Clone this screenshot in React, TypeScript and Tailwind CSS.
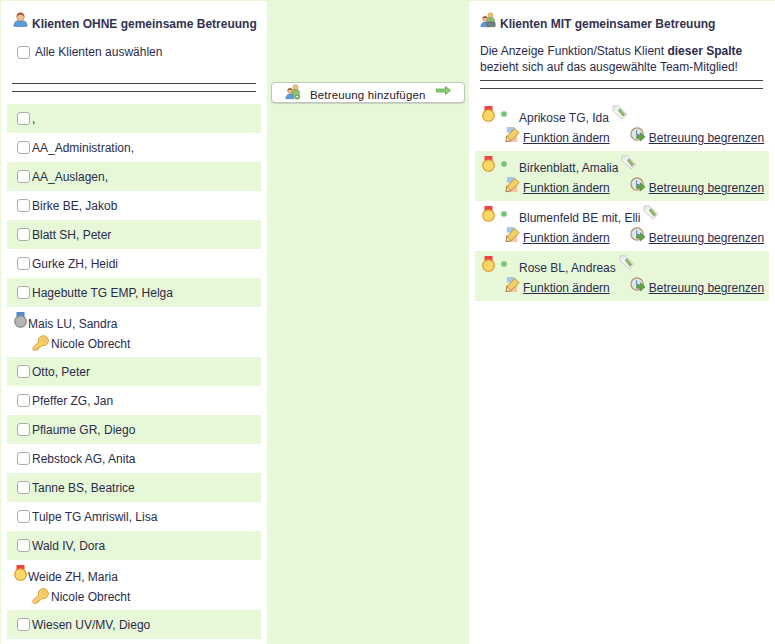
import React from "react";

const PersonIcon = () => (
  <svg width="15" height="15" viewBox="0 0 16 16" className="shrink-0">
    <path d="M1 14.500c0-3 2-5 4-5h6c2 0 4 2 4 5 0 1-1 1-2 1H3c-1 0-2 0-2-1z" fill="#5b9bdc" stroke="#3b74b0" strokeWidth="0.7" />
    <circle cx="8" cy="5.500" r="4" fill="#f0bd94" stroke="#b97f58" strokeWidth="0.6" />
    <path d="M4 5.500c-.5-3 1.500-5 4-5s4.500 2 4 5c-1-2-2-2.500-4-2.500S5 3.500 4 5.500z" fill="#9a5a2c" />
  </svg>
);

const GroupIcon = ({ plus }: { plus?: boolean }) => (
  <svg width="16" height="16" viewBox="0 0 19 19" className="shrink-0">
    <circle cx="12.500" cy="4" r="3" fill="#eebd84" stroke="#c58a3e" strokeWidth="0.6" />
    <path d="M8 9c0-1.500 2-2.500 4.500-2.500S17 7.500 17 9v6H8z" fill="#8dbb6a" stroke="#5d8d43" strokeWidth="0.6" />
    <circle cx="6" cy="8" r="3" fill="#f0bd94" stroke="#a9714a" strokeWidth="0.6" />
    <path d="M3 8c0-2 1.500-3 3-3s3 1 3 3c-1-1-5-1-6 0z" fill="#9a5a2c" />
    <path d="M1 17.500c0-3 2-5.500 5-5.500s5 2.500 5 5.500z" fill="#5b9bdc" stroke="#3b74b0" strokeWidth="0.6" />
    {plus ? (
      <>
        <circle cx="14.500" cy="15" r="3.500" fill="#4f9a3c" stroke="#ffffff" strokeWidth="0.6" />
        <path d="M12.800 15h3.400M14.500 13.300v3.400" stroke="#ffffff" strokeWidth="1" />
      </>
    ) : (
      <rect x="8" y="12" width="10" height="5.500" rx="1" fill="#777f88" stroke="#444c55" strokeWidth="0.6" />
    )}
  </svg>
);

const Medal = ({ silver }: { silver?: boolean }) => (
  <svg width="13" height="16" viewBox="0 0 13 16" className="shrink-0">
    <rect x="2.500" y="0" width="8" height="6" fill={silver ? "#4f8fc8" : "#ee4444"} />
    <circle cx="6.500" cy="9.500" r="5.800" fill={silver ? "#b5b5b5" : "#fbd76a"} stroke={silver ? "#858585" : "#dd9420"} strokeWidth="1.100" />
  </svg>
);

const Dot = () => (
  <svg width="8" height="8" viewBox="0 0 8 8" className="shrink-0">
    <circle cx="4" cy="4" r="2.800" fill="#74c474" stroke="#a6d0a6" strokeWidth="0.8" />
  </svg>
);

const Tag = () => (
  <svg width="16" height="15" viewBox="0 0 17 16" className="shrink-0">
    <path d="M1 1h5.500l9.500 9-5 5L1 6z" fill="#f6f6f6" stroke="#c4c4c4" strokeWidth="1" />
    <path d="M6 5.500l2.300-2 6 6.500-2.800 2.500z" fill="#8fb56f" />
    <circle cx="3.600" cy="3.400" r="1" fill="#ffffff" stroke="#bdbdbd" strokeWidth="0.5" />
  </svg>
);

const KeyIcon = () => (
  <svg width="17" height="17" viewBox="0 0 17 17" className="shrink-0">
    <path d="M1 12.500l5.500-5.500a5 5 0 1 1 3.500 3.500L8.500 12H7v1.500H5.500V15H3.500l-1 1L1 14.500z" fill="#f6cf6c" stroke="#d6982c" strokeWidth="0.9" />
    <circle cx="12" cy="5" r="1.300" fill="#fff3c4" stroke="#d6982c" strokeWidth="0.6" />
  </svg>
);

const PencilIcon = () => (
  <svg width="15" height="16" viewBox="0 0 16 17" className="shrink-0">
    <rect x="2" y="0" width="8" height="6" fill="#a9c7e4" />
    <path d="M1 9h12v7H3c-1 0-2-1-2-2z" fill="#f3c5a8" />
    <path d="M1 15.500l1-5.500L10.500 1.500l4.500 4.500-8.500 8.500z" fill="#f4cf63" stroke="#b47c22" strokeWidth="0.8" />
    <path d="M1 15.500l1-5.500 4.500 4.500z" fill="#f7e1bc" stroke="#8a5a22" strokeWidth="0.6" />
  </svg>
);

const ClockArrow = () => (
  <svg width="16" height="16" viewBox="0 0 17 17" className="shrink-0">
    <circle cx="7.500" cy="7.500" r="6.500" fill="#dbe6f4" stroke="#b98f5c" strokeWidth="1.300" />
    <path d="M7 3.500V8h3" fill="none" stroke="#4a6fa0" strokeWidth="0.9" />
    <path d="M7 9h4V6l5 4.500-5 4.500v-3H7z" fill="#5fa544" stroke="#3c7a2a" strokeWidth="0.6" />
  </svg>
);

const ArrowRight = () => (
  <svg width="15" height="9" viewBox="0 0 15 9" className="shrink-0">
    <path d="M0 3h9.500V0.500L14.500 4.500 9.500 8.500V6H0z" fill="#8ccf70" stroke="#4f9a3c" strokeWidth="0.7" />
  </svg>
);

const Box = () => (
  <input
    type="checkbox"
    className="m-0 h-[13px] w-[13px] shrink-0 appearance-none rounded-[3px] border border-[#adadad] bg-white"
  />
);

type LeftRow = { name: string; medal?: "gold" | "silver" };

const leftRows: LeftRow[] = [
  { name: "," },
  { name: "AA_Administration," },
  { name: "AA_Auslagen," },
  { name: "Birke BE, Jakob" },
  { name: "Blatt SH, Peter" },
  { name: "Gurke ZH, Heidi" },
  { name: "Hagebutte TG EMP, Helga" },
  { name: "Mais LU, Sandra", medal: "silver" },
  { name: "Otto, Peter" },
  { name: "Pfeffer ZG, Jan" },
  { name: "Pflaume GR, Diego" },
  { name: "Rebstock AG, Anita" },
  { name: "Tanne BS, Beatrice" },
  { name: "Tulpe TG Amriswil, Lisa" },
  { name: "Wald IV, Dora" },
  { name: "Weide ZH, Maria", medal: "gold" },
  { name: "Wiesen UV/MV, Diego" },
];

const rightRows = [
  "Aprikose TG, Ida",
  "Birkenblatt, Amalia",
  "Blumenfeld BE mit, Elli",
  "Rose BL, Andreas",
];

const Rules = () => (
  <div>
    <div className="h-[8px] border-t border-[#444444]" />
    <div className="border-t border-[#444444]" />
  </div>
);

export default function App() {
  return (
    <div className="flex h-[644px] w-[775px] overflow-hidden bg-[#e6f8d8] pt-px font-['Liberation_Sans',Arial,sans-serif] text-[12px] leading-[14px] text-[#2b2b4b]">
      {/* Linke Spalte */}
      <div className="ml-px w-[266px] shrink-0 bg-white">
        <div className="flex h-[30px] items-end pl-[12px]">
          <span className="mb-[4px] mr-[4px]">
            <PersonIcon />
          </span>
          <h2 className="text-[12px] font-bold leading-[14px] text-[#33334f]">Klienten OHNE gemeinsame Betreuung</h2>
        </div>
        <label className="mt-[14px] flex items-center gap-[5px] pl-[16px]">
          <Box />
          <span>Alle Klienten auswählen</span>
        </label>
        <div className="mx-[11px] mt-[24px]">
          <Rules />
        </div>
        <div className="mx-[6px] mt-[12px] w-[254px]">
          {leftRows.map((row, i) => (
            <div key={row.name} className={i % 2 === 0 ? "bg-[#e6f8d8]" : ""}>
              {row.medal ? (
                <div className="h-[50px]">
                  <div className="flex h-[25px] items-end pl-[7px]">
                    <span className="mb-[4px] mr-px">
                      <Medal silver={row.medal === "silver"} />
                    </span>
                    <span className="pb-px">{row.name}</span>
                  </div>
                  <div className="mt-[3px] flex items-center gap-[2px] pl-[25px]">
                    <KeyIcon />
                    <span>Nicole Obrecht</span>
                  </div>
                </div>
              ) : (
                <label className="flex h-[29px] items-center gap-[2px] pl-[10px]">
                  <Box />
                  <span>{row.name}</span>
                </label>
              )}
            </div>
          ))}
        </div>
      </div>

      {/* Mitte */}
      <div className="w-[202px] shrink-0 pl-[4px] pt-[81px]">
        <button className="flex h-[21px] w-[194px] items-center rounded-[4px] border border-[#c4c4c4] bg-white pl-[13px] text-[#2b1b2b] shadow-[0_1px_1px_rgba(0,0,0,0.15)]">
          <span className="mb-[2px]">
            <GroupIcon plus />
          </span>
          <span className="ml-[9px] mt-[5px] text-[11.500px] tracking-[0.15px]">Betreuung hinzufügen</span>
          <span className="mb-[4px] ml-[10px]">
            <ArrowRight />
          </span>
        </button>
      </div>

      {/* Rechte Spalte */}
      <div className="flex-1 bg-white">
        <div className="flex h-[30px] items-end pl-[11px]">
          <span className="mb-[3px] mr-[4px]">
            <GroupIcon />
          </span>
          <h2 className="text-[12px] font-bold leading-[14px] text-[#33334f]">Klienten MIT gemeinsamer Betreuung</h2>
        </div>
        <p className="mt-[12px] pl-[11px] leading-[16px]">
          Die Anzeige Funktion/Status Klient <b>dieser Spalte</b>
          <br />
          bezieht sich auf das ausgewählte Team-Mitglied!
        </p>
        <div className="mx-[11px] mt-[5px] w-[283px]">
          <Rules />
        </div>
        <div className="ml-[6px] mt-[12px] w-[294px]">
          {rightRows.map((name, i) => (
            <div key={name} className={`h-[50px] pl-[7px] ${i % 2 === 1 ? "bg-[#e6f8d8]" : ""}`}>
              <div className="flex h-[24px] items-end">
                <span className="mb-[3px]">
                  <Medal />
                </span>
                <span className="mb-[7px] ml-[5px]">
                  <Dot />
                </span>
                <span className="ml-[11px]">{name}</span>
                <span className="mb-[5px] ml-[3px]">
                  <Tag />
                </span>
              </div>
              <div className="mt-[2px] flex items-end">
                <span className="mb-[2px] ml-[23px]">
                  <PencilIcon />
                </span>
                <a className="ml-[3px] underline">Funktion ändern</a>
                <span className="mb-[2px] ml-[20px]">
                  <ClockArrow />
                </span>
                <a className="ml-[3px] underline">Betreuung begrenzen</a>
              </div>
            </div>
          ))}
        </div>
      </div>
    </div>
  );
}
